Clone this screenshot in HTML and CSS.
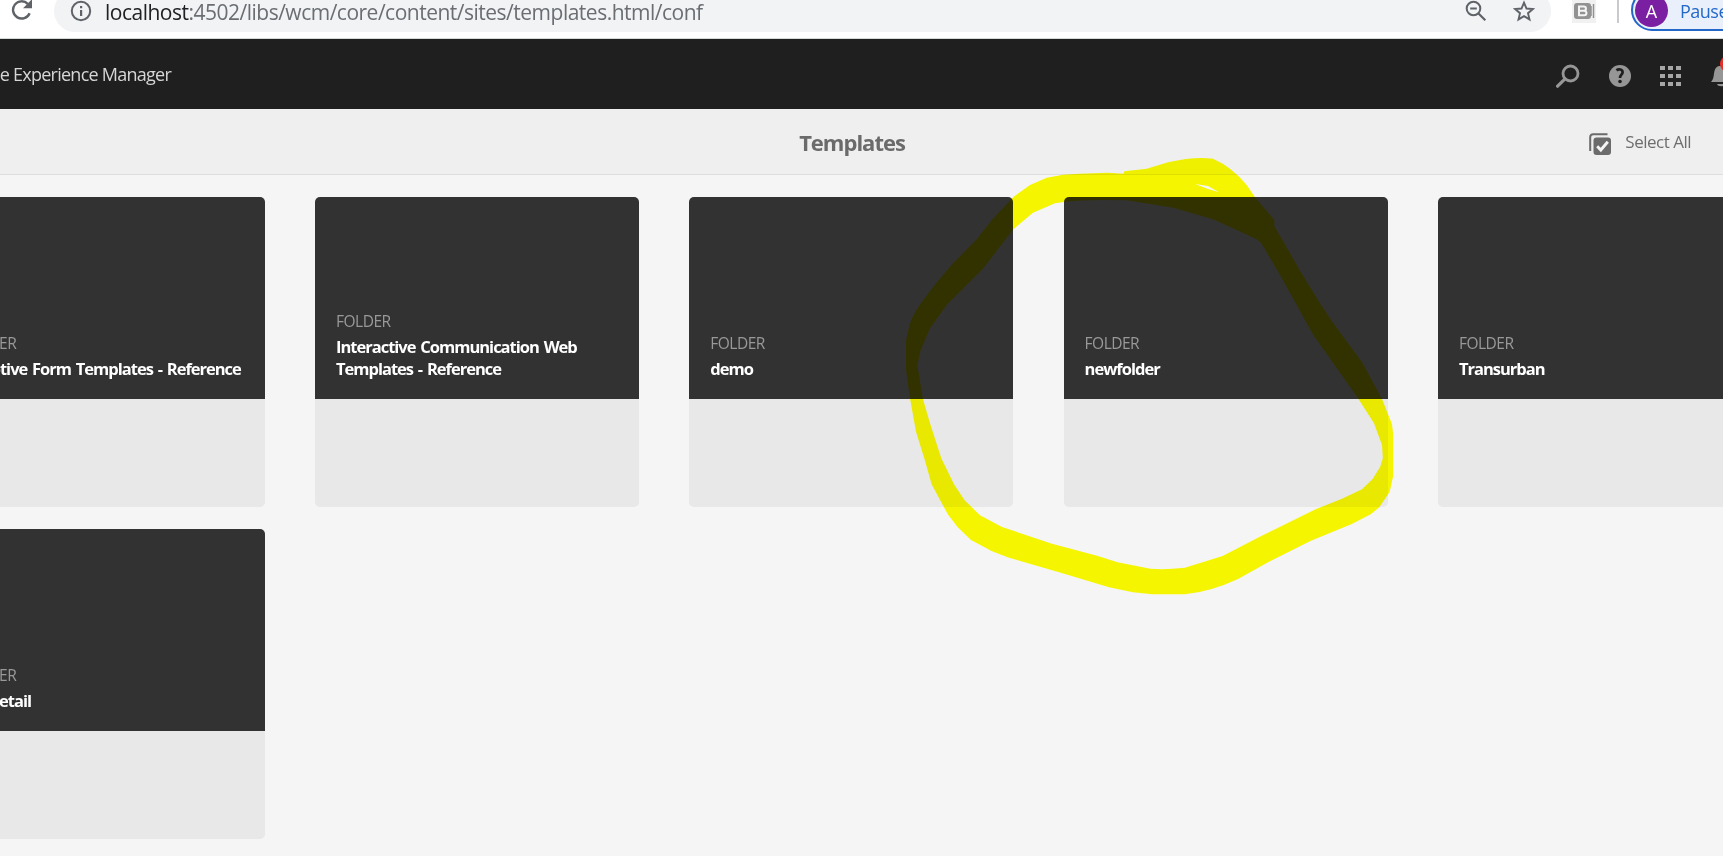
FILE: index.html
```
<!DOCTYPE html>
<html lang="en">
<head>
  <meta charset="UTF-8">
  <meta name="viewport" content="width=device-width, initial-scale=1.0">
  <title>Templates</title>
  <link rel="stylesheet" href="styles.css">
</head>
<body>
  <div class="browser-bar">
    <svg class="reload" width="24" height="24" viewBox="0 0 24 24">
      <path d="M19.6 15.2A8.6 8.6 0 1 1 17.8 5.9" fill="none" stroke="#5f6368" stroke-width="2.4"/>
      <path d="M22 1.2V10.2H13z" fill="#5f6368"/>
    </svg>
    <div class="address">
      <svg class="info" width="22" height="22" viewBox="0 0 22 22">
        <circle cx="11" cy="11" r="9.2" fill="none" stroke="#5f6368" stroke-width="2"/>
        <path d="M10 6h2.2v2.2H10zM10 10h2.2v6H10z" fill="#5f6368"/>
      </svg>
      <span class="url"><span class="host">localhost</span>:4502/libs/wcm/core/content/sites/templates.html/conf</span>
      <svg class="zoom-out" width="22" height="22" viewBox="0 0 22 22">
        <circle cx="8.5" cy="8.5" r="6.8" fill="none" stroke="#5f6368" stroke-width="2"/>
        <path d="M5.2 8.5h6.6M13.5 13.5l6.8 6.8" fill="none" stroke="#5f6368" stroke-width="2.2"/>
      </svg>
      <svg class="star" width="22" height="22" viewBox="0 0 22 22">
        <path d="M11 2.6l2.5 5.9 6.4.5-4.9 4.2 1.5 6.2L11 16.1l-5.5 3.3L7 13.2 2.1 9l6.4-.5z" fill="none" stroke="#5f6368" stroke-width="1.9"/>
      </svg>
    </div>
    <svg class="extension" width="24" height="24" viewBox="0 0 24 24">
      <path d="M0 0h24v24H0z" fill="#f1f1f1"/>
      <rect x="2" y="4" width="17" height="16" rx="3" fill="#929292"/>
      <path d="M19 7v10M21.5 5v14" stroke="#929292" stroke-width="1.5"/>
      <path d="M7 7.500h4.800a2 2 0 0 1 0 4.300H7zM7 11.800h5.200a2.200 2.200 0 0 1 0 4.500H7z" fill="none" stroke="#f4f4f4" stroke-width="2"/>
    </svg>
    <div class="divider"></div>
    <div class="profile">
      <span class="avatar">A</span>
      <span class="paused">Paused</span>
    </div>
  </div>

  <div class="header">
    <span class="brand">Adobe Experience Manager</span>
    <div class="header-icons">
      <svg width="24" height="24" viewBox="0 0 24 24">
        <circle cx="14.5" cy="9.5" r="7.5" fill="none" stroke="#969696" stroke-width="2.8"/>
        <path d="M9 14.800L1.600 22.200" stroke="#969696" stroke-width="3.2" stroke-linecap="round"/>
      </svg>
      <svg width="22" height="22" viewBox="0 0 22 22">
        <circle cx="11" cy="11" r="11" fill="#969696"/>
        <path d="M7.500 5.400C9.500 3.700 13.600 4.100 13.600 7.300C13.600 9.700 11 9.800 11 13" fill="none" stroke="#1f1f1f" stroke-width="2.7"/>
        <circle cx="11" cy="16.5" r="1.8" fill="#1f1f1f"/>
      </svg>
      <svg width="22" height="22" viewBox="0 0 22 22">
        <path d="M0 1h5v4H0zM8 1h5v4H8zM16 1h5v4h-5zM0 9h5v4H0zM8 9h5v4H8zM16 9h5v4h-5zM0 17h5v4H0zM8 17h5v4H8zM16 17h5v4h-5z" fill="#a6a6a6"/>
      </svg>
      <svg class="bell" width="28" height="34" viewBox="0 0 28 34">
        <path d="M0 26C3 23 2.500 19 3.500 15C4.500 11 7 10 9 10h2c4 0 6 3 6.500 6.500C18 21 18 23 21 26z" fill="#969696"/>
        <path d="M6 28h8c-1 3-7 3-8 0z" fill="#969696"/>
        <circle cx="17" cy="8" r="8" fill="#e8302a"/>
      </svg>
    </div>
  </div>

  <div class="title-bar">
    <h1>Templates</h1>
    <div class="select-all">
      <svg width="22" height="22" viewBox="0 0 22 22">
        <path d="M1.200 18V4a3 3 0 0 1 3-2.800H18.500" fill="none" stroke="#6b6b6b" stroke-width="2"/>
        <rect x="4.5" y="4.5" width="17.5" height="17.5" rx="3" fill="#6b6b6b"/>
        <path d="M8.200 13.300l3.600 3.700 7-8.200" fill="none" stroke="#f4f4f4" stroke-width="2.9"/>
      </svg>
      <span>Select All</span>
    </div>
  </div>

  <div class="cards">
    <div class="card">
      <div class="card-top">
        <span class="type">FOLDER</span>
        <span class="name">Adaptive Form Templates - Reference</span>
      </div>
    </div>
    <div class="card">
      <div class="card-top">
        <span class="type">FOLDER</span>
        <span class="name">Interactive Communication Web<br>Templates - Reference</span>
      </div>
    </div>
    <div class="card">
      <div class="card-top">
        <span class="type">FOLDER</span>
        <span class="name">demo</span>
      </div>
    </div>
    <div class="card">
      <div class="card-top">
        <span class="type">FOLDER</span>
        <span class="name">newfolder</span>
      </div>
    </div>
    <div class="card">
      <div class="card-top">
        <span class="type">FOLDER</span>
        <span class="name">Transurban</span>
      </div>
    </div>
    <div class="card">
      <div class="card-top">
        <span class="type">FOLDER</span>
        <span class="name">We.Retail</span>
      </div>
    </div>
  </div>

  <!-- highlighter loop around newfolder -->
  <svg class="marker" width="1723" height="856" viewBox="0 0 1723 856">
    <path fill="#ff0" fill-rule="evenodd" d="M1013.700 196.700L1030 185L1046.700 177.700L1063 174.700L1080 173.700L1108 172.700L1123.500 173.700L1124.300 171.300L1146.700 168.700L1168 162.300Q1195 156 1213 158.700Q1232 167 1246.700 185L1255 197.300L1274.300 220V226L1300 270.700L1320 303.300L1333.300 323.300L1361.700 361.700L1381.700 398.300L1387 411.700L1392 424L1393 433.300V476.700L1389.700 491.700L1379.300 507.300L1370.700 514.300L1351.800 524L1310.400 541L1269 561.700L1238 579Q1210 592 1184.800 594.300H1152L1133 592.300L1109 587.300L1062.500 573.300L1009 557.700L992 551.300L971 540L957.500 527L947.800 514.300L931.600 484.300L924.800 460L916 431.700L910.300 400L906 370V340L910 323.300Q914 312 923.300 300Q935 284 953 263.300L976.700 239.300L993.300 218.300z
      M1013.700 229L1033 212.700L1055 203.300Q1080 199 1126.700 200.300L1173.300 207.700L1213 219.300L1256.700 239.300L1261 242.700L1280 275L1313.300 335L1358 398.300L1374 423.300L1382 445L1382.800 458.300L1380 467.300L1372.400 479.300L1362 489.300L1341.400 499L1315.600 509.300L1258.800 537.300L1222.600 556L1184.800 567.700Q1165 570 1150.300 568.700L1117.600 562.300L1097 555.700L1052 543.700L1002 527L980 515.300L964.400 500L954 484.300L941.300 458.300L930 423.300L923 399.300L917.300 365L920.700 350L930 328.300L946.700 305L983.300 268.300L1005 240z
      M1195 184L1208 186L1219 192.300L1208 189z"/>
  </svg>
</body>
</html>
```
FILE: styles.css
```
* {
  box-sizing: border-box;
}

body {
  margin: 0;
  height: 856px;
  overflow: hidden;
  background: #f5f5f5;
  font-family: "Open Sans", "Noto Sans", sans-serif;
}

svg {
  display: block;
  flex-shrink: 0;
}

.browser-bar {
  display: flex;
  align-items: flex-start;
  height: 39px;
  overflow: hidden;
  background: #fff;
  border-bottom: 1px solid #d5d8d8;
}

.reload {
  margin: -2px 20px 0 10px;
}

.address {
  display: flex;
  align-items: center;
  flex-shrink: 0;
  width: 1497px;
  height: 42px;
  margin-top: -10px;
  padding: 0 16px;
  border-radius: 21px;
  background: #f1f3f4;
}

.url {
  flex: 1;
  margin: 2px 0 0 13px;
  font-size: 21px;
  line-height: 28px;
  letter-spacing: -0.5px;
  color: #6a6e73;
  white-space: nowrap;
}

.host {
  color: #202124;
}

.star {
  margin-left: 26px;
}

.extension {
  margin: -1px 0 0 21px;
}

.divider {
  flex-shrink: 0;
  width: 2px;
  height: 23px;
  margin-left: 21px;
  background: #c8cacd;
}

.profile {
  display: flex;
  align-items: center;
  flex-shrink: 0;
  width: 140px;
  height: 42px;
  margin: -11px 0 0 12px;
  padding-left: 2px;
  border: 2px solid #2367c9;
  border-radius: 21px;
  background: #e9f0fb;
}

.avatar {
  width: 33px;
  height: 33px;
  border-radius: 50%;
  background: #7b1fa2;
  color: #fff;
  font-size: 18px;
  line-height: 35px;
  text-align: center;
}

.paused {
  margin: 2px 0 0 12px;
  font-size: 18px;
  letter-spacing: -0.5px;
  color: #2367c9;
}

.header {
  display: flex;
  align-items: center;
  justify-content: space-between;
  height: 70px;
  background: #1f1f1f;
}

.brand {
  width: 171px;
  display: flex;
  justify-content: flex-end;
  margin-top: -1px;
  font-size: 18px;
  letter-spacing: -0.75px;
  color: #d6d6d6;
  white-space: nowrap;
}

.header-icons {
  display: flex;
  align-items: center;
  gap: 29px;
  height: 34px;
  margin: 3px -16px 0 0;
}

.bell {
  margin-top: -6px;
}

.title-bar {
  display: grid;
  grid-template-columns: 1fr auto 1fr;
  align-items: center;
  height: 66px;
  padding: 0 32px 0 13px;
  background: #efefef;
  border-bottom: 1px solid #dedede;
}

.title-bar h1 {
  grid-column: 2;
  margin: 0;
  font-size: 22px;
  line-height: 30px;
  letter-spacing: -1px;
  color: #6b6b6b;
}

.select-all {
  display: flex;
  align-items: center;
  justify-self: end;
  gap: 14px;
  font-size: 17px;
  letter-spacing: -0.5px;
  color: #6e6e6e;
}

.select-all svg {
  margin-top: 4px;
}

.cards {
  display: grid;
  grid-template-columns: repeat(5, 324px);
  column-gap: 50.3px;
  row-gap: 22px;
  margin: 22px 0 0 -59.3px;
}

.card {
  height: 310px;
  overflow: hidden;
  border-radius: 5px;
  background: #e8e8e8;
}

.card-top {
  display: flex;
  flex-direction: column;
  justify-content: flex-end;
  height: 202px;
  padding: 0 20px 19px 21px;
  background: #323232;
}

.type {
  margin-bottom: 4px;
  font-size: 15.5px;
  line-height: 22px;
  letter-spacing: -0.5px;
  color: #999;
}

.name {
  font-size: 16.5px;
  font-weight: bold;
  line-height: 22px;
  letter-spacing: -1px;
  word-spacing: 1.5px;
  color: #fff;
  white-space: nowrap;
}

.marker {
  position: absolute;
  top: 0;
  left: 0;
  mix-blend-mode: multiply;
  pointer-events: none;
}
```
